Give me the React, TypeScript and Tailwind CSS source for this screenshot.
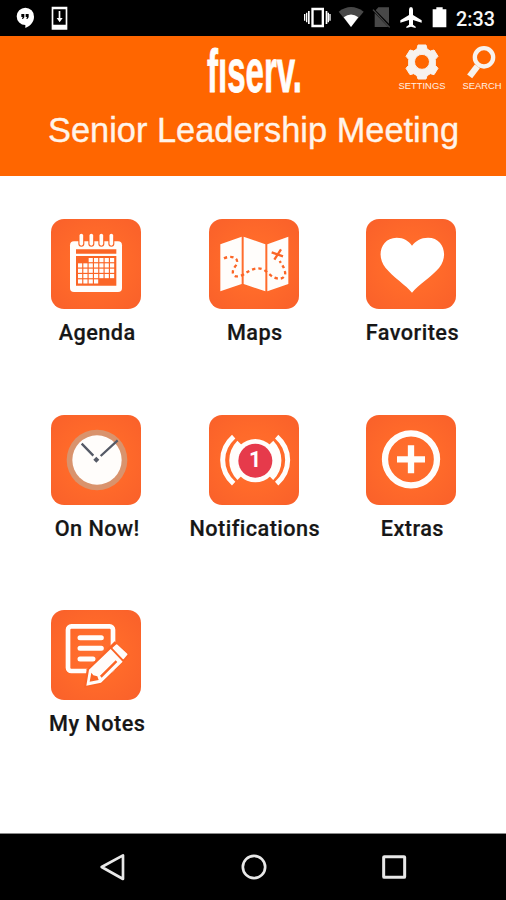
import type { ReactNode } from "react";

const WHITE = "#fffdfb";
const ORANGE = "#fb6526";

function StatusBar() {
  return (
    <div className="flex h-[36px] items-center justify-between bg-black pl-[16px] pr-[10px]">
      <div className="flex items-center gap-[16px]">
        <svg width="19" height="22" viewBox="48 23 57 66" fill="#fff">
          <path d="M76 25a26 26 0 0 1 26 27c0 14-9 27-26 34v-9a26 26 0 0 1 0-52z" />
          <path d="M64 44h9v10l-4 5h-3l2-6h-4zM77 44h9v10l-4 5h-3l2-6h-4z" fill="#000" />
        </svg>
        <svg width="17" height="24" viewBox="153 18 51 72">
          <path d="M155 20h47v69h-47zM160 28v46h37V28z" fill="#fff" fillRule="evenodd" />
          <path d="M176 33h5v21h7l-9 13-9-13h6z" fill="#fff" />
        </svg>
      </div>
      <div className="flex items-center">
        <svg width="152" height="24" viewBox="40 19 456 72">
          <g fill="#fff">
            <path d="M65 24h38v59H65zM72 32v43h24V32z" fillRule="evenodd" />
            <path d="M55 34h5v39h-5zM49 39h4v29h-4zM43 43h4v20h-4zM108 34h5v39h-5zM114 39h4v29h-4zM119 43h4v20h-4z" />
          </g>
          <path d="M184 82 147 36q37-28 75 0z" fill="#484848" />
          <path d="M184 82 162 53q22-17 44 0z" fill="#fff" />
          <path d="M266 23h32v49L258 32z" fill="#484848" />
          <path d="M255 40l41 42h-41z" fill="#484848" />
          <path d="M250 30l50 53" stroke="#484848" strokeWidth="4" />
          <path
            d="M364 22q6 0 6 8v16l26 16v7l-26-8v14l8 6v4l-14-4-14 4v-4l8-6V61l-26 8v-7l26-16V30q0-8 6-8z"
            fill="#fff"
          />
          <path d="M440 23h19v6h11v54h-41V29h11z" fill="#fff" />
        </svg>
        <span className="ml-[1px] mt-[3px] w-[40px] whitespace-nowrap text-[19.8px] font-medium leading-none text-[#f7f7f7]">
          2:33
        </span>
      </div>
    </div>
  );
}

function Logo() {
  return (
    <svg width="96" height="52" viewBox="0 0 96 52" className="overflow-visible">
      <text
        x="0"
        y="49"
        fontFamily="'Liberation Sans Narrow', 'Liberation Sans', Arial, sans-serif"
        fontWeight="700"
        fontSize="61"
        textLength="95"
        lengthAdjust="spacingAndGlyphs"
        fill={WHITE}
        stroke={WHITE}
        strokeWidth="0.8"
      >
        fıserv.
      </text>
    </svg>
  );
}

function Header() {
  return (
    <header className="relative flex h-[140px] flex-col items-center bg-[#ff6600]">
      <div className="mt-[7px] h-[52px] pl-[3px]">
        <Logo />
      </div>
      <h1 className="mt-[14px] whitespace-nowrap pl-[1px] font-['Liberation_Sans',Arial,sans-serif] text-[34.4px] leading-[42px] text-[#fff4ea] [-webkit-text-stroke:0.35px_#fff4ea]">
        Senior Leadership Meeting
      </h1>
      <div className="absolute right-[4px] top-[8px] flex gap-[16px] text-[#fff0e4]">
        <div className="flex w-[48px] flex-col items-center">
          <svg width="34" height="36" viewBox="346 133 102 108" fill="#f7f2ee" stroke="#f7f2ee" strokeWidth="3" strokeLinejoin="round">
            <path
              fillRule="evenodd"
              d="M385 136h24l3 12 10 6 11-3 12 19-8 9v18l8 9-12 19-11-3-10 6-3 10h-24l-3-10-10-6-11 3-12-19 8-9v-18l-8-9 12-19 11 3 10-6zM397 164a22.500 22.500 0 1 0 0 45a22.500 22.500 0 1 0 0-45z"
            />
          </svg>
          <span className="mt-[1px] font-['Liberation_Sans',Arial,sans-serif] text-[9.4px] leading-[10px]">SETTINGS</span>
        </div>
        <div className="flex w-[40px] flex-col items-center">
          <svg width="32" height="36" viewBox="530 133 96 108" fill="none" stroke="#f7f2ee">
            <circle cx="584" cy="173" r="27.500" strokeWidth="13" />
            <path d="M564 200 541 230" strokeWidth="19" />
          </svg>
          <span className="mt-[1px] font-['Liberation_Sans',Arial,sans-serif] text-[9.4px] leading-[10px]">SEARCH</span>
        </div>
      </div>
    </header>
  );
}

function AgendaIcon() {
  const cells = [];
  for (let row = 0; row < 5; row++) {
    for (let col = 0; col < 7; col++) {
      if ((row === 0 && col < 2) || (row === 4 && col > 3)) continue;
      cells.push(<rect key={`${row}-${col}`} x={114 + col * 16} y={144 + row * 16} width="12.5" height="12.5" />);
    }
  }
  return (
    <g fill={WHITE}>
      <rect x="90" y="94" width="156" height="152" rx="12" />
      <path d="M108 118h121v13H108zM108 138h121v89H108z" fill={ORANGE} />
      {cells}
      {[124, 154, 184, 214].map((x) => (
        <g key={x}>
          <rect x={x - 9} y="82" width="18" height="28" rx="9" fill={ORANGE} />
          <rect x={x - 5.5} y="71" width="11" height="36" rx="5.5" />
        </g>
      ))}
    </g>
  );
}

function MapsIcon() {
  return (
    <g>
      <path d="M67 103 131 80v142L67 244zM137 80l65 23v141l-65-22zM208 103l63-23v142l-63 22z" fill={WHITE} />
      <path
        d="M78 145c16-8 43-6 39 14-2 10-15 16-12 32 4 16 30 5 40-3 14-9 34-18 52-9 15 9 24 24 40 26 17 4 27-6 24-20-2-12-8-19-16-32"
        fill="none"
        stroke={ORANGE}
        strokeWidth="7"
        strokeDasharray="10 9"
      />
      <path d="M221 127 255 139M249 118 229 149" stroke={ORANGE} strokeWidth="7" />
    </g>
  );
}

function HeartIcon() {
  return (
    <path
      d="M168 248C151 227 111 201 89 174 60 140 73 84 122 83c22 0 36 10 46 24 11-14 26-24 48-24 47 0 63 55 33 91-23 27-62 51-81 74z"
      fill="#fff"
    />
  );
}

function ClockIcon() {
  return (
    <g>
      <circle cx="171" cy="164" r="91" fill="#d9936d" />
      <circle cx="171" cy="164" r="74" fill={WHITE} />
      <path d="M125 115 160 151M182 152 233 105" stroke="#555a66" strokeWidth="7" />
      <path d="M169 154l9 9-9 9-9-9z" fill="#555a66" />
    </g>
  );
}

function BroadcastIcon() {
  return (
    <g>
      <g fill="none" stroke={WHITE}>
        <path d="M161 94c-44 39-44 101 0 141M290 94c44 39 44 101 0 141" strokeWidth="15" />
        <path d="M179 113c-29 30-29 76 0 104M273 113c29 30 29 76 0 104" strokeWidth="19" />
      </g>
      <circle cx="226" cy="166" r="65" fill={WHITE} />
      <circle cx="226" cy="166" r="51" fill="#e63a4b" />
      <text x="225" y="184" textAnchor="middle" fontFamily="Roboto, sans-serif" fontWeight="700" fontSize="64" fill="#fff">
        1
      </text>
    </g>
  );
}

function ExtrasIcon() {
  return (
    <g fill="none" stroke={WHITE}>
      <circle cx="165" cy="162" r="78" strokeWidth="19" />
      <path d="M165 120v84M123 162h84" strokeWidth="19" />
    </g>
  );
}

function NotesIcon() {
  return (
    <g>
      <rect x="84" y="79" width="135" height="134" rx="10" fill="none" stroke={WHITE} strokeWidth="14" />
      <path d="M120 113h64M120 145h64M120 177h39" stroke={WHITE} strokeWidth="15" strokeLinecap="round" />
      <path d="M132 263l8-55 84-84 46 42-86 86z" fill={ORANGE} />
      <path
        fillRule="evenodd"
        fill={WHITE}
        d="M139 257l8-48 65-62 36 38-65 63zM154 218l-5 27 27-5-4-11-12-3zM180 227l47-46 5 5-47 47z"
      />
      <path d="M220 144l10-9 30 28-10 12z" fill={WHITE} stroke={WHITE} strokeWidth="5" strokeLinejoin="round" />
    </g>
  );
}

type AppTile = { label: string; viewBox: string; icon: ReactNode };

const tiles: AppTile[] = [
  { label: "Agenda", viewBox: "33 27 270 270", icon: <AgendaIcon /> },
  { label: "Maps", viewBox: "33 27 270 270", icon: <MapsIcon /> },
  { label: "Favorites", viewBox: "30 27 270 270", icon: <HeartIcon /> },
  { label: "On Now!", viewBox: "33 29 270 270", icon: <ClockIcon /> },
  { label: "Notifications", viewBox: "87 29 270 270", icon: <BroadcastIcon /> },
  { label: "Extras", viewBox: "30 29 270 270", icon: <ExtrasIcon /> },
  { label: "My Notes", viewBox: "33 30 270 270", icon: <NotesIcon /> },
];

function Tile({ label, viewBox, icon }: AppTile) {
  return (
    <div className="flex flex-col items-center">
      <div className="size-[90px] overflow-hidden rounded-[13px] bg-[radial-gradient(circle_at_50%_50%,#ff7030_0%,#ff6a2a_45%,#f9602a_100%)]">
        <svg width="90" height="90" viewBox={viewBox}>
          {icon}
        </svg>
      </div>
      <span className="mt-[11.4px] whitespace-nowrap pl-[2px] text-[21.7px] font-medium leading-[26px] tracking-[0.45px] text-[#161616] [-webkit-text-stroke:0.2px_#161616]">
        {label}
      </span>
    </div>
  );
}

function NavBar() {
  return (
    <nav className="flex h-[67px] items-center justify-between border-t border-[#8a8a8a] bg-black pl-[100px] pr-[98px]">
      <svg width="27" height="28" viewBox="62 83 81 84" fill="none" stroke="#e8e8e8" strokeWidth="8" strokeLinejoin="round">
        <path d="M67 125 131 90v71z" />
      </svg>
      <svg width="28" height="28" viewBox="479 83 84 84" fill="none" stroke="#e8e8e8" strokeWidth="8">
        <circle cx="521" cy="125" r="33.500" />
      </svg>
      <svg width="28" height="28" viewBox="900 83 84 84" fill="none" stroke="#e8e8e8" strokeWidth="9">
        <rect x="911" y="94" width="63" height="62" rx="2" />
      </svg>
    </nav>
  );
}

export default function App() {
  return (
    <div className="flex h-[900px] w-[506px] flex-col overflow-hidden bg-white font-[Roboto,sans-serif]">
      <StatusBar />
      <Header />
      <main className="grow pt-[43px]">
        <div className="ml-[17.4px] grid w-[472.8px] auto-rows-[195.5px] grid-cols-3">
          {tiles.map((tile) => (
            <Tile key={tile.label} {...tile} />
          ))}
        </div>
      </main>
      <NavBar />
    </div>
  );
}
